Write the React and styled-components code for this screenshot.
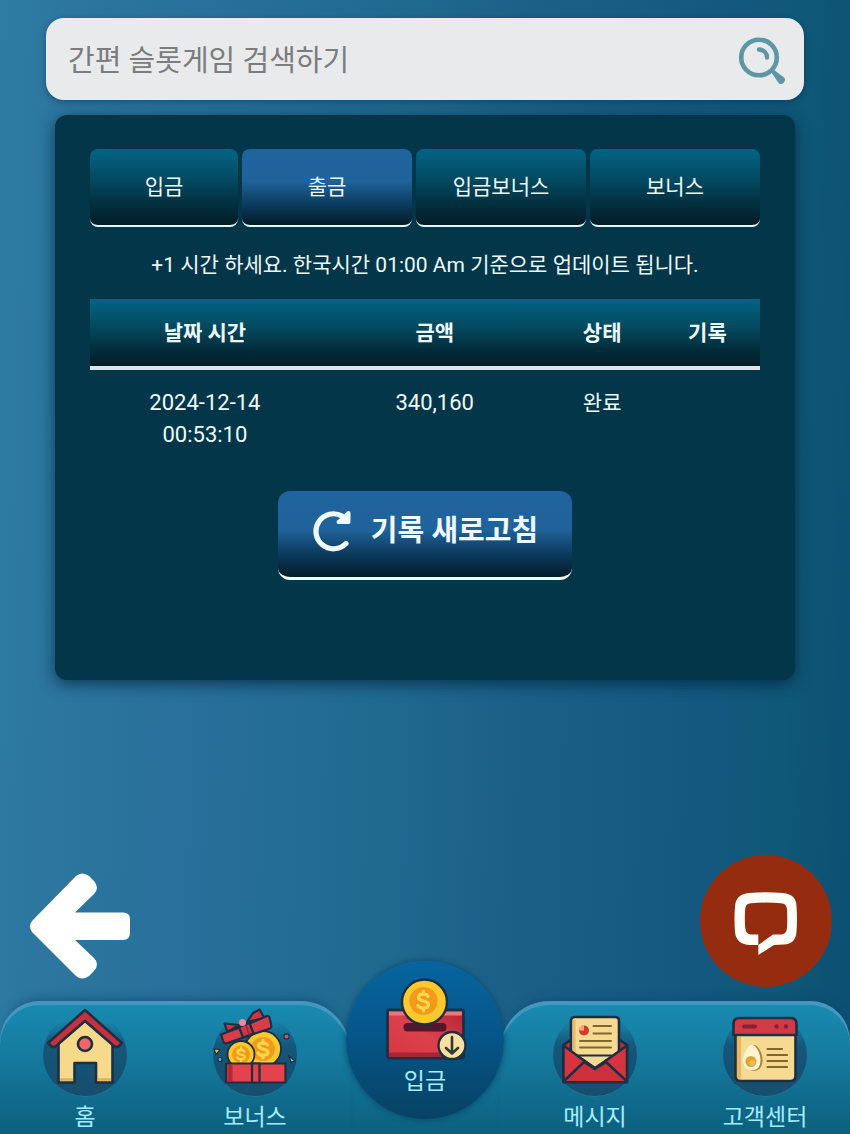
import React, { useState } from "react";
import styled, { createGlobalStyle } from "styled-components";

const GlobalStyle = createGlobalStyle`
  * {
    box-sizing: border-box;
  }

  body {
    margin: 0;
    font-family: Roboto, "Noto Sans CJK KR", sans-serif;
    color: #eefaff;
  }

  button,
  input {
    font-family: inherit;
    color: inherit;
  }
`;

const Page = styled.div`
  display: flex;
  flex-direction: column;
  min-height: 100vh;
  padding-top: 18px;
  overflow: hidden;
  background: linear-gradient(
    92deg,
    #2d7ca3 0%,
    #2c769f 8%,
    #28709b 25%,
    #206a90 45%,
    #1c6088 60%,
    #145880 82%,
    #0f5877 91%,
    #0c4f72 100%
  );
`;

const SearchBar = styled.form`
  display: flex;
  align-items: center;
  height: 82px;
  margin: 0 46px;
  padding: 3px 18px 0 22px;
  border-radius: 18px;
  background: #e9eaec;
  box-shadow: 0 2px 6px rgba(0, 30, 50, 0.4);
`;

const SearchInput = styled.input`
  flex: 1;
  min-width: 0;
  padding: 0;
  border: 0;
  outline: 0;
  background: transparent;
  color: #444;
  font-size: 29px;
  line-height: 44px;

  &::placeholder {
    color: #7c7c7c;
    opacity: 1;
  }
`;

const SearchButton = styled.button`
  display: flex;
  padding: 0;
  border: 0;
  background: transparent;
  cursor: pointer;
`;

const Panel = styled.main`
  margin: 15px 55px 0;
  padding: 34px 35px 100px;
  border-radius: 12px;
  background: #033649;
  box-shadow: 0 4px 16px rgba(0, 30, 55, 0.7);
  text-align: center;
`;

const Tabs = styled.div`
  display: grid;
  grid-template-columns: 148fr 170fr 170fr 170fr;
  gap: 4px;
`;

const Tab = styled.button`
  height: 78px;
  padding: 0 4px;
  border: 0;
  border-bottom: 2px solid #e6f6fa;
  border-radius: 8px;
  background: ${(props) =>
    props.$active
      ? "linear-gradient(#20649e 0%, #20629a 42%, #0c3c60 72%, #031c29 100%)"
      : "linear-gradient(#036485 0%, #034a61 40%, #03303f 72%, #031c27 100%)"};
  font-size: 21px;
  line-height: 30px;
  cursor: pointer;
`;

const Notice = styled.p`
  margin: 22px 0 18px;
  font-size: 21px;
  line-height: 32px;
`;

const RecordTable = styled.table`
  width: 100%;
  table-layout: fixed;
  border-collapse: separate;
  border-spacing: 0;
  font-size: 22px;
  line-height: 32px;

  th {
    height: 71px;
    padding: 0;
    border-bottom: 4px solid #dce6ea;
    background: linear-gradient(#036485 0%, #034a61 40%, #03303f 72%, #031c27 100%);
    font-size: 21px;
    font-weight: 700;
  }

  td {
    padding: 17px 4px 16px;
    vertical-align: top;
  }

  td:nth-child(3) {
    font-size: 21px;
  }
`;

const Column = styled.col`
  width: ${(props) => props.$width};
`;

const RefreshButton = styled.button`
  display: inline-flex;
  align-items: center;
  gap: 18px;
  height: 89px;
  margin-top: 24px;
  padding: 0 34px 6px;
  border: 0;
  border-bottom: 3px solid #f2fbff;
  border-radius: 12px;
  background: linear-gradient(#20649e 0%, #20629a 45%, #0c3c60 72%, #031c29 100%);
  font-size: 29px;
  font-weight: 700;
  line-height: 42px;
  cursor: pointer;
`;

const FloatingRow = styled.div`
  display: flex;
  justify-content: space-between;
  align-items: flex-end;
  margin-top: auto;
  padding: 24px 18px 14px 30px;
`;

const BackButton = styled.button`
  display: flex;
  margin-bottom: 8px;
  padding: 0;
  border: 0;
  background: transparent;
  cursor: pointer;
`;

const ChatButton = styled.button`
  display: flex;
  width: 132px;
  height: 132px;
  padding: 0;
  border: 0;
  border-radius: 50%;
  background: #952c0f;
  cursor: pointer;
`;

const BottomNav = styled.nav`
  display: grid;
  grid-template-columns: 2fr 1fr 2fr;
  height: 133px;
  background: linear-gradient(transparent 56px, #157a9e 56px, #0c5f7e 133px);
`;

const NavSide = styled.div`
  display: grid;
  grid-template-columns: 1fr 1fr;
  margin: ${(props) => (props.$right ? "0 0 0 -10px" : "0 -10px 0 0")};
  padding: ${(props) => (props.$right ? "0 0 0 10px" : "0 10px 0 0")};
  border-radius: ${(props) => (props.$right ? "50px 40px 0 0" : "40px 50px 0 0")};
  background: linear-gradient(#1a8bb2 0, #157a9e 56px, #0c5f7e 133px);
  box-shadow: inset 0 4px 0 #4697bf, 0 -8px 10px -6px rgba(10, 70, 110, 0.6);
`;

const NavLink = styled.a`
  display: flex;
  flex-direction: column;
  align-items: center;
  padding-top: 7px;
  color: #a5ecff;
  font-size: 23px;
  line-height: 32px;
  text-decoration: none;
  white-space: nowrap;

  svg {
    margin-bottom: 4px;
  }
`;

const DepositLink = styled.a`
  position: relative;
  z-index: 1;
  justify-self: center;
  display: flex;
  flex-direction: column;
  align-items: center;
  width: 158px;
  height: 158px;
  margin-top: -40px;
  padding-top: 17px;
  border-radius: 50%;
  background: linear-gradient(#07659f 0%, #06568a 45%, #074263 100%);
  box-shadow: 0 0 6px rgba(5, 60, 95, 0.8);
  color: #a5ecff;
  font-size: 23px;
  line-height: 32px;
  text-decoration: none;

  svg {
    margin-bottom: 4px;
  }
`;

const ink = "#1d2f42";

const SearchIcon = () => (
  <svg width="48" height="48" viewBox="0 0 48 48" fill="none" aria-hidden="true">
    <circle cx="21" cy="20.5" r="17.8" stroke="#5f96a6" strokeWidth="4.6" />
    <path d="M21 12.5c4.5 0 8 3.500 8 8" stroke="#5f96a6" strokeWidth="4.4" strokeLinecap="round" />
    <path d="M33 35l2.500-2.500 10.500 8c3.500 3-2.500 9-5.500 5.500z" fill="#5f96a6" />
  </svg>
);

const RefreshIcon = () => (
  <svg width="41" height="42" viewBox="0 0 41 42" fill="none" aria-hidden="true">
    <path
      d="M34 33.500A17.500 17.500 0 1 1 30 6"
      stroke="#f2fbff"
      strokeWidth="5.200"
      strokeLinecap="round"
    />
    <path
      d="M36.500 3v9H26.500l5-4z"
      fill="#f2fbff"
      stroke="#f2fbff"
      strokeWidth="4"
      strokeLinejoin="round"
    />
  </svg>
);

const BackIcon = () => (
  <svg width="100" height="106" viewBox="0 0 100 106" aria-hidden="true">
    <path
      d="M2 48 46 3Q52-2 59 3L64 8Q70 15 64 21L45 39.500H93Q100 39.500 100 46V60Q100 67 93 67H45L64 85Q70 91 64 98L59 103Q52 108 46 103L2 59Q-2 53.500 2 48Z"
      fill="#fff"
    />
  </svg>
);

const ChatIcon = () => (
  <svg width="132" height="132" viewBox="0 0 132 132" aria-hidden="true">
    <path
      d="M49 38Q66 36.500 83 38Q96 39 96.500 51Q97.500 64 96.500 77Q95.500 89 84 89.500L74 90L58.300 100V90H49Q36 89 35 77Q34 64 35 51Q36 39 49 38ZM51 48.200Q45.500 48.500 45.200 54Q44.500 64 45.200 73Q46 79.300 51 79.500H58.300V90L73 79.500H81Q86.500 79 87 73Q87.500 64 87 54Q86.500 48.500 81 48.200Q66 47 51 48.200Z"
      fill="#fffdf8"
      fillRule="evenodd"
    />
  </svg>
);

const IconDisc = ({ id, children }) => (
  <svg width="84" height="90" viewBox="0 0 84 90" aria-hidden="true">
    <defs>
      <linearGradient id={id} x1="0" y1="0" x2="0" y2="1">
        <stop offset="0.1" stopColor="#144f72" stopOpacity="0" />
        <stop offset="0.4" stopColor="#144f72" stopOpacity="0.85" />
        <stop offset="1" stopColor="#174c6c" stopOpacity="0.95" />
      </linearGradient>
    </defs>
    <circle cx="42" cy="47" r="42" fill={`url(#${id})`} />
    <path d="M12 76A42 42 0 0 0 72 76" fill="none" stroke="#23739a" strokeWidth="1" />
    {children}
  </svg>
);

const HomeIcon = () => (
  <IconDisc id="disc-home">
    <g stroke={ink} strokeWidth="2.6" strokeLinejoin="round">
      <path d="M15.5 32 42 8l27.500 24v42.500H53V55H31.500v19.500h-16z" fill="#f6d98b" />
      <path d="M42 2 79 35l-3.500 3.500q-2 1-4 0L42 13 12.500 38.500q-2 1-4 0L5 35z" fill="#c9303e" />
      <circle cx="42" cy="36" r="7" fill="#f0646b" />
    </g>
    <path d="M17 71.500h13M54.500 71.500h13.500" stroke="#d9b25c" strokeWidth="2.5" />
  </IconDisc>
);

const Coin = ({ cx, cy, r }) => (
  <g>
    <circle cx={cx} cy={cy} r={r} fill="#fbc92b" stroke={ink} strokeWidth="1.8" />
    <circle cx={cx} cy={cy} r={r * 0.66} fill="#f39a1d" />
    <g
      transform={`translate(${cx} ${cy}) scale(${r / 20})`}
      fill="none"
      stroke="#fbd64a"
      strokeWidth="3.6"
      strokeLinecap="round"
    >
      <path d="M5-4.500C4-7-5-8-5-3.500S5.500-.5 5.500 3.500-4 8-5.500 4.500M0-10v3M0 7v3" />
    </g>
  </g>
);

const BonusIcon = () => (
  <IconDisc id="disc-bonus">
    <Coin cx={50} cy={41} r={18} />
    <Coin cx={28} cy={46.5} r={13.5} />
    <g stroke={ink} strokeWidth="2.2" strokeLinejoin="round" fill="#e2434c">
      <path d="M13 55.500h59.500v19H13z" />
      <path d="M39 55.500h7.500v19H39z" />
      <g fill="#cf3543">
        <path d="M26 17 11.500 15.500l3 8.500zM34 14l6-9 6.500-3.500 5 8.500z" />
        <path d="M8 26.500Q31 18 54 8q2-.5 2.500 1.500l2 8.500q0 2-1.500 2.500L13 35.500q-2 0-2.500-1.500z" fill="#da3d48" />
        <path d="m26 19 10.500-4 4 10.500-10.500 4z" />
      </g>
      <circle cx="29.500" cy="14.500" r="3.5" fill="#e08fa0" stroke="none" />
    </g>
    <path d="M14.500 57h5v16h-5z" fill="#b32837" />
    <path d="M33 17l3.500 10.500" stroke="#a32235" strokeWidth="1.4" />
    <g stroke={ink} strokeWidth="1.2">
      <circle cx="73.500" cy="28.500" r="2.6" fill="#dc5260" />
      <path d="m1 41 6 .5-4 5z" fill="#eebb57" />
      <circle cx="7" cy="51.500" r="2" fill="#72b7a6" />
      <path d="m76 48 6 5-4 1z" fill="#9acdbb" />
    </g>
  </IconDisc>
);

const MessageIcon = () => (
  <IconDisc id="disc-message">
    <g stroke={ink} strokeWidth="2.6" strokeLinejoin="round">
      <path d="M10.500 37 18 31.500h48l8 5.500v37H10.500z" fill="#b92f3d" />
      <path d="M18 13q0-4 4-4h40q4 0 4 4v31L42 60 18 44z" fill="#f6da92" />
      <path d="M10.500 37.500 42 60.500l32-23V74H10.500z" fill="#d83440" />
      <path d="m11 73 20-19 11 7 11-7 20.500 19" fill="#ce2f3c" />
    </g>
    <path d="M19.500 12v30.500l3 2V12z" fill="#e6ba67" />
    <path d="M25 47.500h34" stroke={ink} strokeWidth="2" />
    <path d="M40.500 18H58M40.500 25.500H58M27 33h31M27 39.500h31" stroke="#7f672b" strokeWidth="2" strokeLinecap="round" />
    <circle cx="31" cy="22.500" r="5" fill="#d43a26" />
    <path d="M31 22.500v-5.500a5.500 5.500 0 0 0-5.500 5.500z" fill="#f4a58e" />
  </IconDisc>
);

const SupportIcon = () => (
  <IconDisc id="disc-support">
    <g stroke={ink} strokeWidth="2.6" strokeLinejoin="round">
      <path d="M12.500 26h60v42q0 5-5 5h-50q-5 0-5-5z" fill="#f6da92" />
      <path d="M10.500 27V16q0-6 6-6h51q6 0 6 6v11z" fill="#d33a48" />
    </g>
    <path d="M14 29h4v42q-4 0-4-4z" fill="#e9b865" />
    <path d="M21 18.500h11" stroke="#8c1f32" strokeWidth="4" strokeLinecap="round" />
    <circle cx="53.500" cy="18.500" r="2.2" fill="#8c1f32" />
    <circle cx="63" cy="18.500" r="2.2" fill="#8c1f32" />
    <path d="M31 37c4 0 8.500 8 8.500 15s-3.500 11-9 11-8-4-8-11 4-15 8.500-15z" fill="#a88334" />
    <path d="M29 37c4 0 8.500 8 8.500 15s-3.500 10.500-8.500 10.500-9-3.500-9-10.500 5-15 9-15z" fill="#fff3d2" />
    <circle cx="28" cy="53.500" r="5.5" fill="#dca72f" />
    <circle cx="29.500" cy="55" r="3" fill="#e6bb58" />
    <path d="M44.500 41H59M44.500 47H64M44.500 53H64M44.500 59H64" stroke="#7f672b" strokeWidth="2.2" strokeLinecap="round" />
  </IconDisc>
);

const DepositIcon = () => (
  <svg width="84" height="84" viewBox="-2 0 84 84" aria-hidden="true">
    <defs>
      <linearGradient id="box" x1="0" y1="1" x2="1" y2="0">
        <stop offset="0" stopColor="#d73743" />
        <stop offset="0.5" stopColor="#db414b" />
        <stop offset="1" stopColor="#b52335" />
      </linearGradient>
    </defs>
    <rect x="2.500" y="32" width="76" height="48" rx="2" fill="url(#box)" stroke={ink} strokeWidth="2.8" />
    <path d="M4 35.500h73" stroke="#e87984" strokeWidth="4" />
    <path d="M4 76.500h73" stroke="#ac2432" strokeWidth="4" />
    <rect x="18.500" y="45" width="43" height="8.5" rx="4" fill="#51182d" />
    <circle cx="39.500" cy="24" r="22.500" fill="#fbc92b" stroke={ink} strokeWidth="2.4" />
    <path d="M52 8a20.500 20.500 0 0 1-22 36 20.500 20.500 0 0 0 22-36z" fill="#eaa51f" />
    <circle cx="38.500" cy="23" r="14" fill="#f39a1d" />
    <path
      d="M43 18.500c-1-3-9.500-3.500-9.500 1s10 2.500 10 7-9 4.500-10.500 1M38.500 13v3M38.500 30v3"
      fill="none"
      stroke="#fbd64a"
      strokeWidth="3.2"
      strokeLinecap="round"
    />
    <circle cx="67" cy="67.500" r="13.500" fill="#f8dfa0" stroke={ink} strokeWidth="2.4" />
    <path
      d="M67 59v16.500M61 70l6 5.500 6-5.500"
      fill="none"
      stroke="#30383e"
      strokeWidth="2.6"
      strokeLinecap="round"
      strokeLinejoin="round"
    />
  </svg>
);

const tabs = ["입금", "출금", "입금보너스", "보너스"];

const records = [
  { date: "2024-12-14", time: "00:53:10", amount: "340,160", status: "완료" },
];

function App() {
  const [activeTab, setActiveTab] = useState(1);

  return (
    <>
      <GlobalStyle />
      <Page>
        <SearchBar role="search" onSubmit={(e) => e.preventDefault()}>
          <SearchInput
            type="text"
            placeholder="간편 슬롯게임 검색하기"
            aria-label="간편 슬롯게임 검색하기"
          />
          <SearchButton type="submit" aria-label="검색">
            <SearchIcon />
          </SearchButton>
        </SearchBar>

        <Panel>
          <Tabs role="tablist">
            {tabs.map((tab, index) => (
              <Tab
                key={tab}
                type="button"
                role="tab"
                aria-selected={activeTab === index}
                $active={activeTab === index}
                onClick={() => setActiveTab(index)}
              >
                {tab}
              </Tab>
            ))}
          </Tabs>

          <Notice>+1 시간 하세요. 한국시간 01:00 Am 기준으로 업데이트 됩니다.</Notice>

          <RecordTable>
            <colgroup>
              <Column $width="34.3%" />
              <Column $width="34.3%" />
              <Column $width="15.7%" />
              <Column $width="15.7%" />
            </colgroup>
            <thead>
              <tr>
                <th scope="col">날짜 시간</th>
                <th scope="col">금액</th>
                <th scope="col">상태</th>
                <th scope="col">기록</th>
              </tr>
            </thead>
            <tbody>
              {records.map((record) => (
                <tr key={record.date + record.time}>
                  <td>
                    {record.date}
                    <br />
                    {record.time}
                  </td>
                  <td>{record.amount}</td>
                  <td>{record.status}</td>
                  <td />
                </tr>
              ))}
            </tbody>
          </RecordTable>

          <RefreshButton type="button">
            <RefreshIcon />
            기록 새로고침
          </RefreshButton>
        </Panel>

        <FloatingRow>
          <BackButton type="button" aria-label="뒤로">
            <BackIcon />
          </BackButton>
          <ChatButton type="button" aria-label="채팅">
            <ChatIcon />
          </ChatButton>
        </FloatingRow>

        <BottomNav>
          <NavSide>
            <NavLink href="#home">
              <HomeIcon />
              홈
            </NavLink>
            <NavLink href="#bonus">
              <BonusIcon />
              보너스
            </NavLink>
          </NavSide>
          <DepositLink href="#deposit">
            <DepositIcon />
            입금
          </DepositLink>
          <NavSide $right>
            <NavLink href="#message">
              <MessageIcon />
              메시지
            </NavLink>
            <NavLink href="#support">
              <SupportIcon />
              고객센터
            </NavLink>
          </NavSide>
        </BottomNav>
      </Page>
    </>
  );
}

export default App;
